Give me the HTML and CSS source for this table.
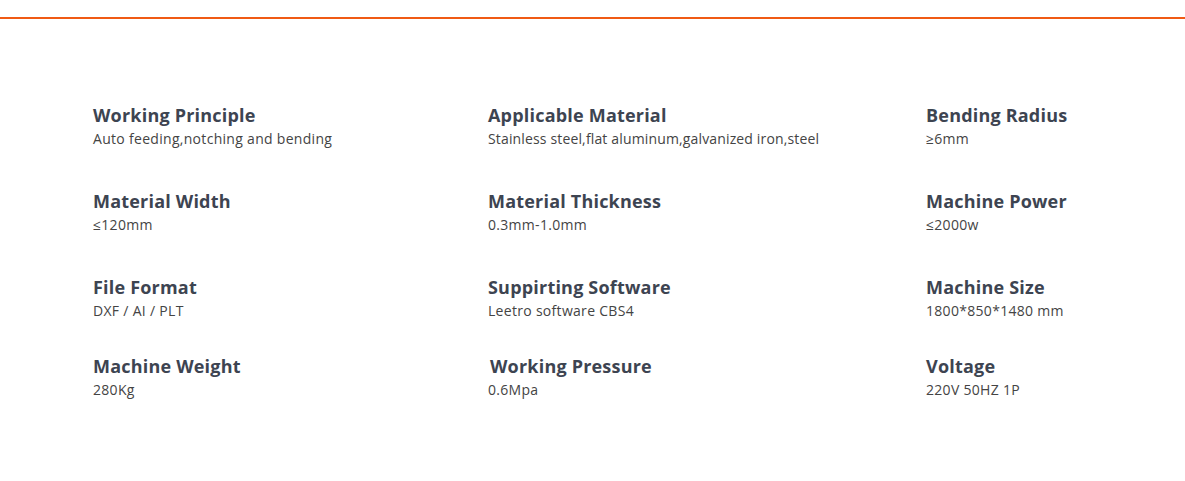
FILE: index.html
```html
<!DOCTYPE html>
<html lang="en">
<head>
<meta charset="utf-8">
<title>Specifications</title>
<link rel="stylesheet" href="styles.css">
</head>
<body>
<div class="topline"></div>
<section class="specs">
  <div class="spec"><h3 class="spec-title">Working Principle</h3><p class="spec-value">Auto feeding,notching and bending</p></div>
  <div class="spec"><h3 class="spec-title">Applicable Material</h3><p class="spec-value spec-value-tight">Stainless steel,flat aluminum,galvanized iron,steel</p></div>
  <div class="spec"><h3 class="spec-title">Bending Radius</h3><p class="spec-value">≥6mm</p></div>

  <div class="spec"><h3 class="spec-title">Material Width</h3><p class="spec-value">≤120mm</p></div>
  <div class="spec"><h3 class="spec-title">Material Thickness</h3><p class="spec-value">0.3mm-1.0mm</p></div>
  <div class="spec"><h3 class="spec-title">Machine Power</h3><p class="spec-value">≤2000w</p></div>

  <div class="spec"><h3 class="spec-title">File Format</h3><p class="spec-value">DXF / AI / PLT</p></div>
  <div class="spec"><h3 class="spec-title">Suppirting Software</h3><p class="spec-value">Leetro software CBS4</p></div>
  <div class="spec"><h3 class="spec-title">Machine Size</h3><p class="spec-value">1800*850*1480 mm</p></div>

  <div class="spec"><h3 class="spec-title">Machine Weight</h3><p class="spec-value">280Kg</p></div>
  <div class="spec spec-shift"><h3 class="spec-title">Working Pressure</h3><p class="spec-value spec-value-back">0.6Mpa</p></div>
  <div class="spec"><h3 class="spec-title">Voltage</h3><p class="spec-value">220V 50HZ 1P</p></div>
</section>
</body>
</html>
```

FILE: styles.css
```css
html, body {
  margin: 0;
  padding: 0;
  background: #ffffff;
}

body {
  font-family: "Open Sans", "Noto Sans", "Liberation Sans", sans-serif;
  width: 1185px;
  height: 481px;
  overflow: hidden;
}

.topline {
  margin-top: 17px;
  height: 2px;
  background: #f05a14;
}

.specs {
  display: grid;
  grid-template-columns: 395px 438px 1fr;
  grid-template-rows: 86px 86px 79px auto;
  padding: 84px 0 0 93px;
}

.spec {
  display: flex;
  flex-direction: column;
}

.spec-shift {
  padding-left: 2px;
}

.spec-title {
  margin: 0;
  font-size: 18px;
  line-height: 24px;
  font-weight: 700;
  color: #3d4451;
  letter-spacing: 0.2px;
}

.spec-value {
  margin: 0;
  padding-top: 1px;
  font-size: 14px;
  line-height: 22px;
  color: #444444;
  letter-spacing: 0.3px;
}

.spec-value-tight {
  letter-spacing: 0.15px;
}

.spec-value-back {
  margin-left: -2px;
}
```
